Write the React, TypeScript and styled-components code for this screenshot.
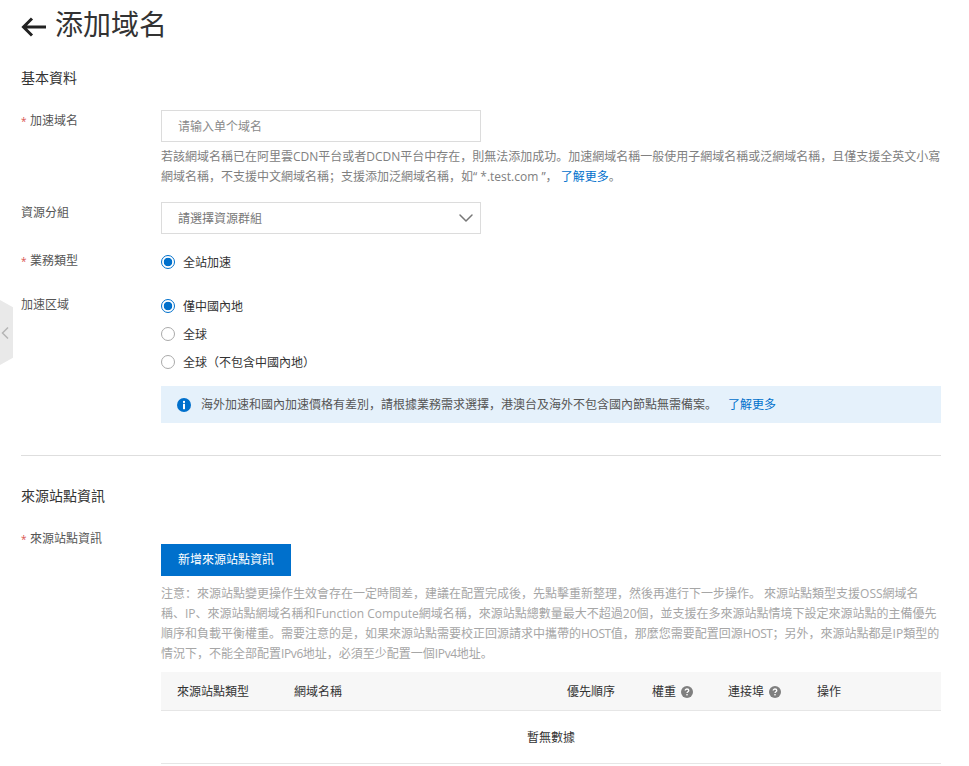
import React from 'react'
import styled, { createGlobalStyle } from 'styled-components'
import { ChevronDown } from 'lucide-react'

const GlobalStyle = createGlobalStyle`
  html, body {
    margin: 0;
    padding: 0;
    background: #ffffff;
  }
  body {
    font-family: "Open Sans", "Noto Sans CJK SC", sans-serif;
    font-size: 12px;
    line-height: 20px;
    color: #333333;
    overflow: hidden;
  }
`

const Page = styled.div`
  position: relative;
  width: 969px;
  height: 766px;
  overflow: hidden;
  box-sizing: border-box;
  padding: 0 28px 0 21px;
`

const SideHandle = styled.button`
  position: absolute;
  left: 0;
  top: 300px;
  width: 13px;
  height: 65px;
  padding: 0 4px 0 0;
  border: 0;
  display: flex;
  align-items: center;
  justify-content: center;
  background: #e9e9e9;
  clip-path: polygon(0 0, 100% 11%, 100% 89%, 0 100%);
`

const Header = styled.div`
  display: flex;
  align-items: center;
  gap: 9px;
  height: 48px;
`

const BackIcon = styled.svg`
  margin-top: 6px;
`

const Title = styled.h1`
  margin: 0;
  font-size: 28px;
  line-height: 48px;
  font-weight: 400;
  color: #333333;
`

const SectionTitle = styled.h2<{ $top: number }>`
  margin: ${({ $top }) => $top}px 0 22px;
  font-size: 14px;
  line-height: 20px;
  font-weight: 400;
  color: #333333;
`

const Row = styled.div<{ $top?: number }>`
  display: grid;
  grid-template-columns: 140px 780px;
  margin-top: ${({ $top }) => $top ?? 0}px;
`

const Label = styled.label<{ $offset?: number }>`
  display: block;
  margin-top: ${({ $offset }) => $offset ?? 0}px;
  line-height: 20px;
  color: #555555;
`

const Star = styled.span`
  display: inline-block;
  width: 9px;
  font-size: 10px;
  color: #d9534f;
`

const Input = styled.input`
  display: block;
  box-sizing: border-box;
  width: 320px;
  height: 32px;
  padding: 0 16px;
  border: 1px solid #dcdcdc;
  border-radius: 0;
  outline: none;
  font: inherit;
  color: #555555;

  &::placeholder {
    color: #8a8a8a;
    opacity: 1;
  }
`

const Select = styled.div`
  display: flex;
  align-items: center;
  justify-content: space-between;
  box-sizing: border-box;
  width: 320px;
  height: 32px;
  padding: 0 2px 0 16px;
  border: 1px solid #dcdcdc;
  color: #777777;
`

const SelectText = styled.span`
  margin-top: 2px;
`

const Help = styled.p`
  margin: 5px 0 0;
  line-height: 20px;
  color: #808080;
  white-space: nowrap;
`

const Note = styled.p`
  margin: 8px 0;
  line-height: 20px;
  color: #a6a6a6;
  white-space: nowrap;
`

const Tight = styled.span`
  letter-spacing: -0.4px;
`

const Link = styled.a`
  color: #0070cc;
  text-decoration: none;
`

const RadioRow = styled.div`
  display: flex;
  align-items: center;
  gap: 8px;
  height: 28px;
  color: #333333;
`

const RadioText = styled.span`
  margin-top: 2px;
`

const RadioDot = styled.span<{ $checked?: boolean }>`
  box-sizing: border-box;
  width: 14px;
  height: 14px;
  border-radius: 50%;
  border: 1px solid ${({ $checked }) => ($checked ? '#0070cc' : '#aaaaaa')};
  background: ${({ $checked }) =>
    $checked ? 'radial-gradient(circle, #0070cc 0, #0070cc 4px, #ffffff 4.6px)' : '#ffffff'};
`

const Banner = styled.div`
  display: flex;
  align-items: center;
  box-sizing: border-box;
  height: 37px;
  margin-top: 10px;
  padding-left: 16px;
  gap: 10px;
  background: #e5f1fb;
  color: #555555;
`

const BannerLink = styled(Link)`
  margin-left: 11px;
`

const Divider = styled.hr`
  margin: 32px 0 0;
  border: 0;
  border-top: 1px solid #dedede;
`

const PrimaryButton = styled.button`
  display: block;
  width: 130px;
  height: 32px;
  margin-top: 16px;
  padding: 0;
  border: 0;
  background: #0070cc;
  color: #ffffff;
  font: inherit;
`

const Table = styled.div`
  width: 780px;
`

const TableHead = styled.div`
  display: grid;
  grid-template-columns: 117px 273px 85px 76px 89px 140px;
  height: 39px;
  background: #f7f7f7;
  border-bottom: 1px solid #e6e6e6;
  box-sizing: border-box;
`

const HeadCell = styled.div`
  display: flex;
  align-items: center;
  gap: 5px;
  padding: 2px 0 0 16px;
  color: #333333;
`

const EmptyRow = styled.div`
  display: flex;
  align-items: center;
  justify-content: center;
  height: 53px;
  box-sizing: border-box;
  padding-top: 2px;
  border-bottom: 1px solid #e6e6e6;
  color: #333333;
`

const InfoIcon = () => (
  <svg width="14" height="14" viewBox="0 0 14 14" aria-hidden="true">
    <circle cx="7" cy="7" r="7" fill="#0070cc" />
    <rect x="6" y="5.8" width="2" height="5.4" fill="#ffffff" />
    <rect x="6" y="2.9" width="2" height="2" fill="#ffffff" />
  </svg>
)

const BackArrow = () => (
  <BackIcon width="25" height="20" viewBox="0 0 25 20" aria-hidden="true">
    <path d="M11 1.5 2.5 10l8.5 8.5M3 10h22" fill="none" stroke="#222222" strokeWidth="3" />
  </BackIcon>
)

const HandleChevron = () => (
  <svg width="8" height="12" viewBox="0 0 8 12" aria-hidden="true">
    <path d="M7 .5 1.5 6 7 11.5" fill="none" stroke="#b5b5b5" strokeWidth="1.5" />
  </svg>
)

const HelpBadge = () => (
  <svg width="12" height="12" viewBox="0 0 12 12" aria-hidden="true">
    <circle cx="6" cy="6" r="6" fill="#7f7f7f" />
    <path d="M4.2 4.6C4.2 3.6 5 3 6 3s1.8.6 1.8 1.5c0 1.3-1.8 1.3-1.8 2.6" fill="none" stroke="#ffffff" strokeWidth="1.3" />
    <rect x="5.3" y="8" width="1.4" height="1.4" fill="#ffffff" />
  </svg>
)

const columns = [
  { title: '來源站點類型' },
  { title: '網域名稱' },
  { title: '優先順序' },
  { title: '權重', hint: true },
  { title: '連接埠', hint: true },
  { title: '操作' },
]

const App = () => (
  <Page>
    <GlobalStyle />
    <SideHandle aria-label="收起">
      <HandleChevron />
    </SideHandle>

    <Header>
      <BackArrow />
      <Title>添加域名</Title>
    </Header>

    <SectionTitle $top={20}>基本資料</SectionTitle>

    <Row>
      <Label $offset={1}>
        <Star>*</Star>加速域名
      </Label>
      <div>
        <Input placeholder="请输入单个域名" />
        <Help>
          若該網域名稱已在阿里雲CDN平台或者DCDN平台中存在，則無法添加成功。加速網域名稱一般使用子網域名稱或泛網域名稱，且僅支援全英文小寫
          <br />
          網域名稱，不支援中文網域名稱；支援添加泛網域名稱，如“ *.test.com ”，&nbsp;<Link href="#">了解更多</Link>。
        </Help>
      </div>
    </Row>

    <Row $top={15}>
      <Label $offset={1}>資源分組</Label>
      <Select>
        <SelectText>請選擇資源群組</SelectText>
        <ChevronDown size={24} color="#777777" strokeWidth={1.5} />
      </Select>
    </Row>

    <Row $top={14}>
      <Label $offset={3}>
        <Star>*</Star>業務類型
      </Label>
      <RadioRow>
        <RadioDot $checked />
        <RadioText>全站加速</RadioText>
      </RadioRow>
    </Row>

    <Row $top={16}>
      <Label $offset={3}>加速区域</Label>
      <div>
        <RadioRow>
          <RadioDot $checked />
          <RadioText>僅中國內地</RadioText>
        </RadioRow>
        <RadioRow>
          <RadioDot />
          <RadioText>全球</RadioText>
        </RadioRow>
        <RadioRow>
          <RadioDot />
          <RadioText>全球（不包含中國內地）</RadioText>
        </RadioRow>
        <Banner>
          <InfoIcon />
          <span>
            海外加速和國內加速價格有差別，請根據業務需求選擇，港澳台及海外不包含國內節點無需備案。
            <BannerLink href="#">了解更多</BannerLink>
          </span>
        </Banner>
      </div>
    </Row>

    <Divider />

    <SectionTitle $top={30}>來源站點資訊</SectionTitle>

    <Row>
      <Label $offset={1}>
        <Star>*</Star>來源站點資訊
      </Label>
      <div>
        <PrimaryButton>新增來源站點資訊</PrimaryButton>
        <Note>
          注意：來源站點變更操作生效會存在一定時間差，建議在配置完成後，先點擊重新整理，然後再進行下一步操作。 來源站點類型支援OSS網域名
          <br />
          稱、IP、來源站點網域名稱和Function Compute網域名稱，來源站點總數量最大不超過20個，並支援在多來源站點情境下設定來源站點的主備優先
          <br />
          順序和負載平衡權重。需要注意的是，如果來源站點需要校正回源請求中攜帶的<Tight>HOST</Tight>值，那麼您需要配置回源<Tight>HOST</Tight>；另外，來源站點都是IP類型的
          <br />
          情況下，不能全部配置<Tight>IPv6</Tight>地址，必須至少配置一個<Tight>IPv4</Tight>地址。
        </Note>
        <Table>
          <TableHead>
            {columns.map((col) => (
              <HeadCell key={col.title}>
                {col.title}
                {col.hint && <HelpBadge />}
              </HeadCell>
            ))}
          </TableHead>
          <EmptyRow>暫無數據</EmptyRow>
        </Table>
      </div>
    </Row>
  </Page>
)

export default App
